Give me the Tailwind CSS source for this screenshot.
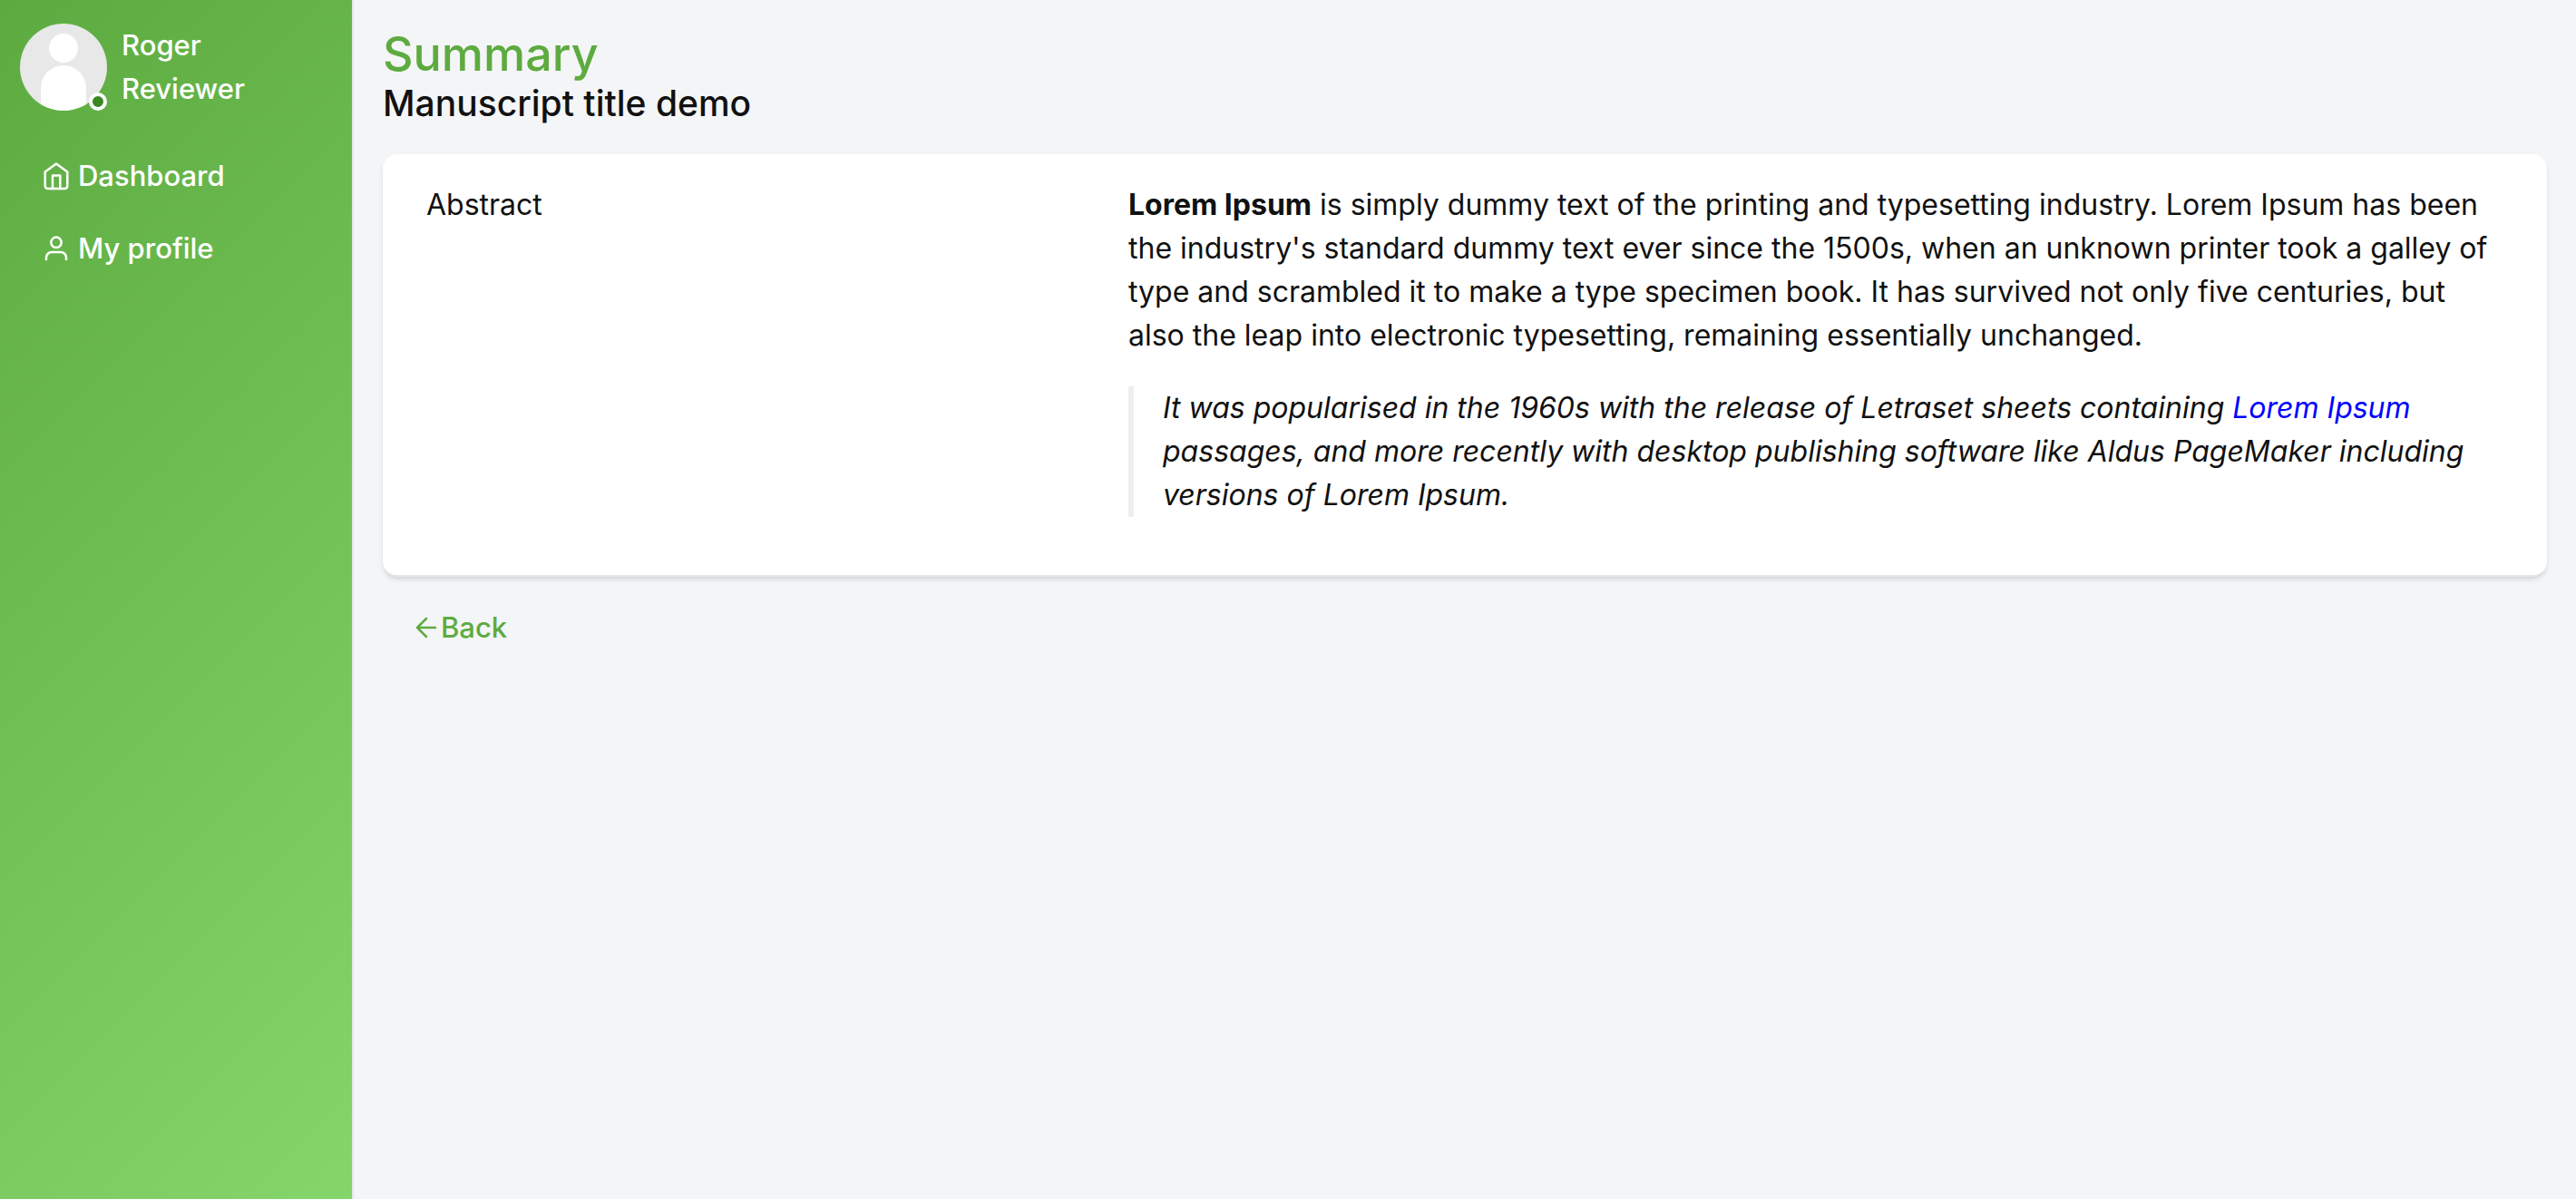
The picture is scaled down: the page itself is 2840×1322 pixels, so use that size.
<!DOCTYPE html>
<html lang="en">
<head>
    <meta charset="UTF-8">
    <meta name="viewport" content="width=device-width, initial-scale=1.0">
    <title>Summary</title>
    <script src="https://cdn.jsdelivr.net/npm/@tailwindcss/browser@4"></script>
</head>
<body class="flex min-h-screen bg-[#f4f5f7] font-[Inter,'Liberation_Sans',sans-serif] text-[32px] leading-12 text-[#111]">

    <aside class="w-[390px] shrink-0 border-r-2 border-[#e5e6e8] bg-linear-[135deg,#5dab40,#84d56a] text-[31px] font-medium text-white">
        <div class="flex items-center gap-4 px-[22px] pt-[26px]">
            <div class="relative size-24 shrink-0">
                <svg class="size-24 rounded-full" viewBox="0 0 96 96" aria-hidden="true">
                    <rect width="96" height="96" fill="#e8e8e8"/>
                    <circle cx="48" cy="27" r="16" fill="#fff"/>
                    <path d="M23 96V71a25 25 0 0 1 50 0v25z" fill="#fff"/>
                </svg>
                <span class="absolute right-0 bottom-0 size-5 rounded-full border-4 border-white bg-[#3a8820]"></span>
            </div>
            <div>Roger<br>Reviewer</div>
        </div>

        <nav class="mt-12 flex flex-col gap-8 px-[46px]">
            <a href="#" class="flex items-center gap-2">
                <svg class="size-8" viewBox="0 0 32 32" fill="none" stroke="currentColor" stroke-width="2.5" stroke-linecap="round" stroke-linejoin="round" aria-hidden="true">
                    <path d="M3.700 11.500 16 2.500l12.300 9V27a3 3 0 0 1-3 3H6.700a3 3 0 0 1-3-3z"/>
                    <path d="M12 30V15.500h8.300V30"/>
                </svg>
                Dashboard
            </a>
            <a href="#" class="flex items-center gap-2">
                <svg class="size-8" viewBox="0 0 32 32" fill="none" stroke="currentColor" stroke-width="2.5" stroke-linecap="round" stroke-linejoin="round" aria-hidden="true">
                    <circle cx="16" cy="9.300" r="5.700"/>
                    <path d="M5 28v-2a6 6 0 0 1 6-6h10a6 6 0 0 1 6 6v2"/>
                </svg>
                My profile
            </a>
        </nav>
    </aside>

    <main class="min-w-0 flex-1 px-8 pt-8">
        <h1 class="text-[52px] leading-14 font-medium text-[#5dab40]">Summary</h1>
        <h2 class="text-[39px] leading-13 font-medium">Manuscript title demo</h2>

        <section class="mt-[30px] grid grid-cols-3 gap-8 rounded-2xl border-b-2 border-[#e5e6e8] bg-white px-12 py-8 shadow-md">
            <div>Abstract</div>
            <div class="col-span-2">
                <p class="mb-8"><strong class="font-bold">Lorem Ipsum</strong> is simply dummy text of the printing and typesetting industry. Lorem Ipsum has been the industry's standard dummy text ever since the 1500s, when an unknown printer took a galley of type and scrambled it to make a type specimen book. It has survived not only five centuries, but also the leap into electronic typesetting, remaining essentially unchanged.</p>
                <blockquote class="mb-8 border-l-6 border-[#eee] pl-8 italic">It was popularised in the 1960s with the release of Letraset sheets containing <a href="#" class="text-[#00f]">Lorem Ipsum</a> passages, and more recently with desktop publishing software like Aldus PageMaker including versions of Lorem Ipsum.</blockquote>
            </div>
        </section>

        <a href="#" class="mt-8 ml-9 inline-flex items-center gap-1 text-[31px] font-medium text-[#5dab40]">
            <svg class="size-6" viewBox="0 0 24 24" fill="none" stroke="currentColor" stroke-width="2.5" stroke-linecap="round" stroke-linejoin="round" aria-hidden="true">
                <path d="M22 12H2M12 2 2 12l10 10"/>
            </svg>
            Back
        </a>
    </main>

</body>
</html>
